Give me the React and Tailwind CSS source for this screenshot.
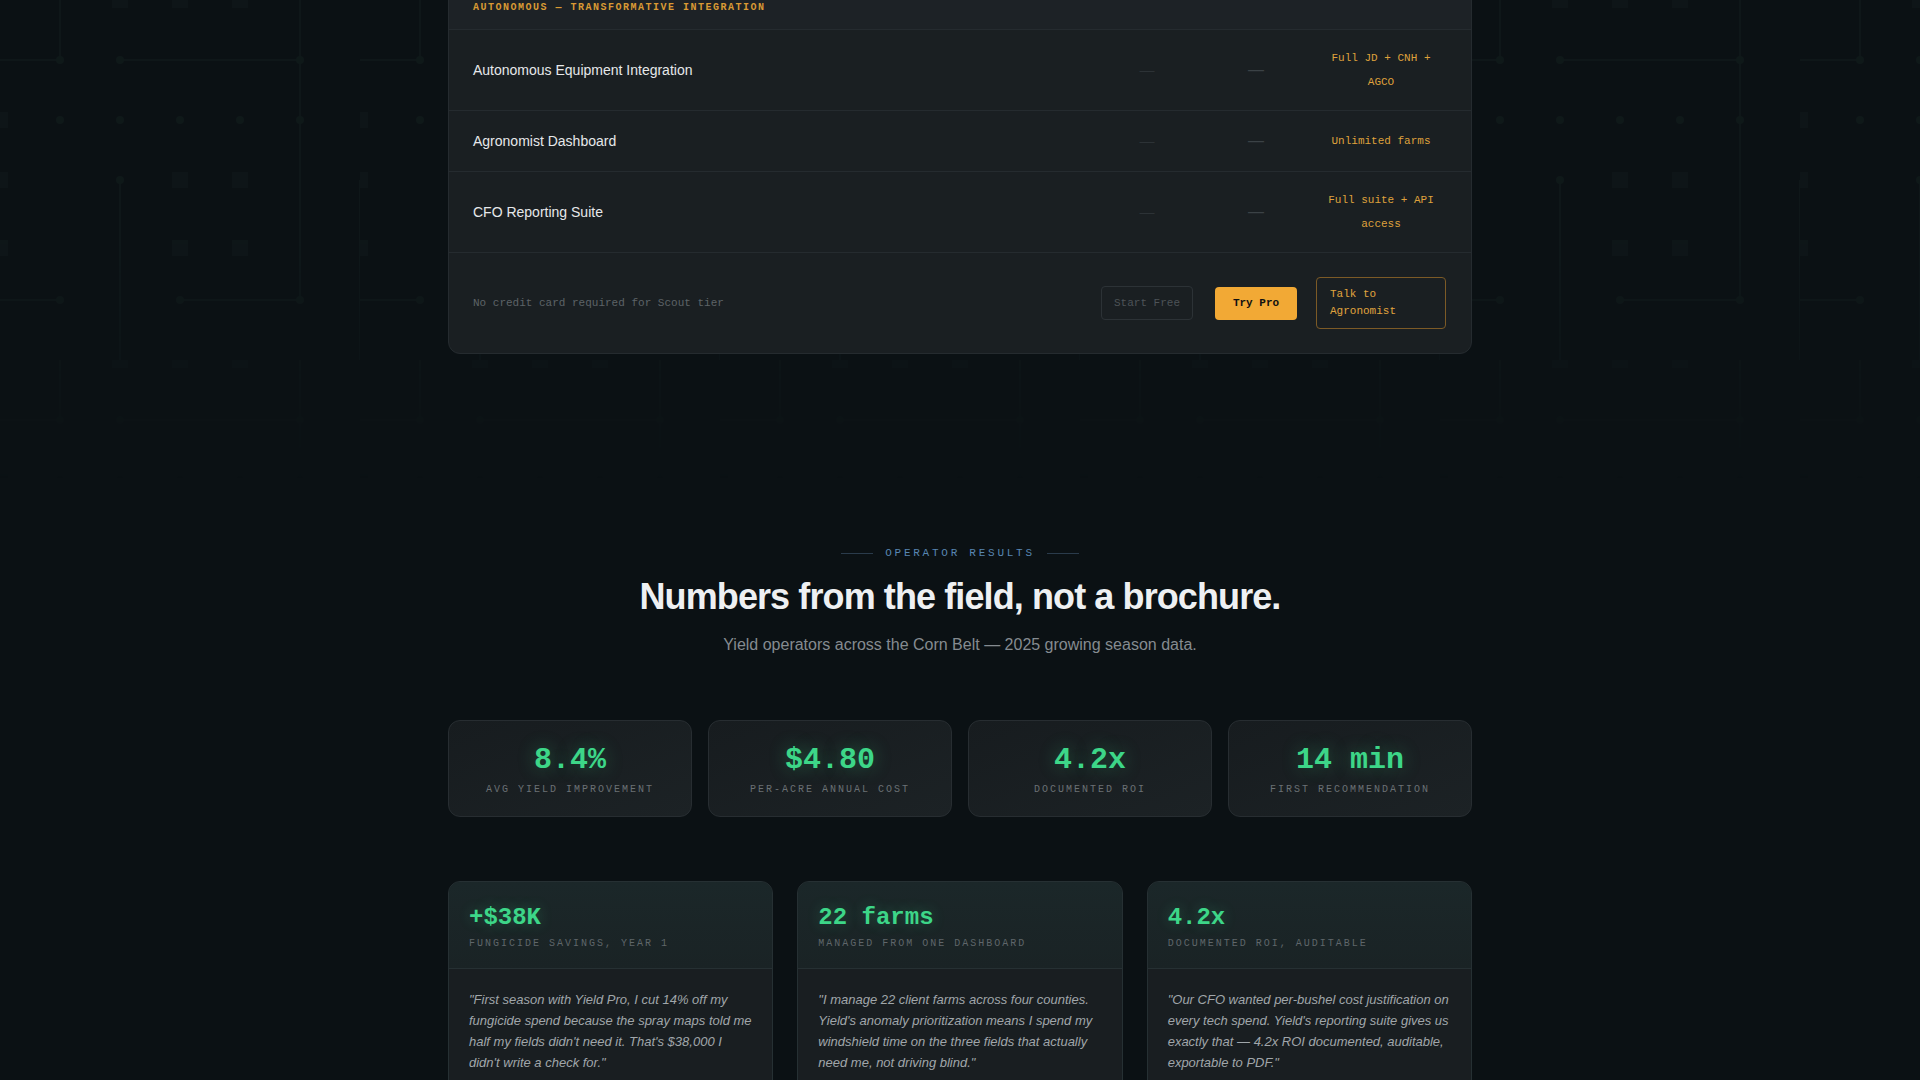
import React from "react";

const mono = "font-['Liberation_Mono',monospace]";
const sans = "font-['Liberation_Sans',Arial,sans-serif]";

const tierRows = [
  { label: "Autonomous Equipment Integration", pro: "Full JD + CNH + AGCO" },
  { label: "Agronomist Dashboard", pro: "Unlimited farms" },
  { label: "CFO Reporting Suite", pro: "Full suite + API access" },
];

const stats = [
  { value: "8.4%", label: "Avg yield improvement" },
  { value: "$4.80", label: "Per-acre annual cost" },
  { value: "4.2x", label: "Documented ROI" },
  { value: "14 min", label: "First recommendation" },
];

const stories = [
  {
    value: "+$38K",
    label: "Fungicide savings, year 1",
    quote:
      "\"First season with Yield Pro, I cut 14% off my fungicide spend because the spray maps told me half my fields didn't need it. That's $38,000 I didn't write a check for.\"",
  },
  {
    value: "22 farms",
    label: "Managed from one dashboard",
    quote:
      "\"I manage 22 client farms across four counties. Yield's anomaly prioritization means I spend my windshield time on the three fields that actually need me, not driving blind.\"",
  },
  {
    value: "4.2x",
    label: "Documented ROI, auditable",
    quote:
      "\"Our CFO wanted per-bushel cost justification on every tech spend. Yield's reporting suite gives us exactly that — 4.2x ROI documented, auditable, exportable to PDF.\"",
  },
];

// faint circuit-board texture behind the top of the page
const CircuitBackdrop = () => (
  <svg
    className="absolute inset-x-0 top-0 h-[480px] w-full opacity-45 [mask-image:linear-gradient(to_bottom,black_50%,transparent)]"
    aria-hidden="true"
  >
    <defs>
      <pattern id="circuit" width="360" height="360" patternUnits="userSpaceOnUse" x="0" y="0">
        <g stroke="#142021" strokeWidth="2" fill="none">
          <path d="M0 60H60M120 60H300M60 0V60M300 0V300M180 300H300M0 300H60M120 180V360M360 180V360" />
        </g>
        <g fill="#131c1e">
          <rect x="112" y="-8" width="16" height="16" />
          <rect x="172" y="-8" width="16" height="16" />
          <rect x="232" y="-8" width="16" height="16" />
          <rect x="172" y="172" width="16" height="16" />
          <rect x="232" y="172" width="16" height="16" />
          <rect x="172" y="240" width="16" height="16" />
          <rect x="232" y="240" width="16" height="16" />
          <rect x="-8" y="112" width="16" height="16" />
          <rect x="-8" y="172" width="16" height="16" />
          <rect x="-8" y="240" width="16" height="16" />
        </g>
        <g fill="#152321">
          <circle cx="60" cy="60" r="4" />
          <circle cx="120" cy="60" r="4" />
          <circle cx="300" cy="60" r="4" />
          <circle cx="60" cy="120" r="4" />
          <circle cx="120" cy="120" r="4" />
          <circle cx="180" cy="120" r="4" />
          <circle cx="240" cy="120" r="4" />
          <circle cx="300" cy="120" r="4" />
          <circle cx="120" cy="180" r="4" />
          <circle cx="180" cy="300" r="4" />
          <circle cx="300" cy="300" r="4" />
          <circle cx="60" cy="300" r="4" />
        </g>
      </pattern>
    </defs>
    <rect width="100%" height="100%" fill="url(#circuit)" />
  </svg>
);

const TierTable = () => (
  <div className="mt-[-15px] overflow-hidden rounded-xl border border-[#252b2f] bg-[#1a1f22]">
    <div className="border-b border-[#252b2f] bg-[#1d2226] px-6 py-[14px]">
      <p className={`${mono} text-[10px] font-bold uppercase leading-[15px] tracking-[0.15em] text-[#d99a34]`}>
        Autonomous — Transformative Integration
      </p>
    </div>

    {tierRows.map((row) => (
      <div
        key={row.label}
        className="grid grid-cols-[1fr_100px_86px_132px] items-center gap-x-4 border-b border-[#252b2f] px-6 py-4"
      >
        <div className={`${sans} text-[14px] text-[#e6e8ea]`}>{row.label}</div>
        <div className={`${sans} flex min-h-7 items-center justify-center text-[15px] text-[#2c3236]`}>—</div>
        <div className={`${sans} flex min-h-7 items-center justify-center text-[16px] text-[#3b4246]`}>—</div>
        <div className={`${mono} px-1 text-center text-[11px] leading-6 text-[#dfa13c]`}>{row.pro}</div>
      </div>
    ))}

    <div className="grid grid-cols-[1fr_100px_86px_132px] items-center gap-x-4 px-6 py-6">
      <p className={`${mono} text-[11px] text-[#5d6367]`}>No credit card required for Scout tier</p>
      <div className="flex justify-center">
        <button className={`${mono} h-[34px] w-[92px] rounded border border-[#2c3236] text-[11px] text-[#4d5357]`}>
          Start Free
        </button>
      </div>
      <div className="flex justify-center">
        <button className={`${mono} h-[33px] w-[82px] rounded bg-[#f2a935] text-[11px] font-bold text-[#111]`}>
          Try Pro
        </button>
      </div>
      <div className="flex justify-center">
        <button
          className={`${mono} w-[130px] rounded border border-[#7c5a26] px-[13px] py-2 text-left text-[11px] leading-[17px] text-[#e0a43e]`}
        >
          Talk to
          <br />
          Agronomist
        </button>
      </div>
    </div>
  </div>
);

const StatCard = ({ value, label }) => (
  <div className="rounded-xl border border-[#272d31] bg-linear-to-br from-[#171c1f] to-[#1c2225] px-5 pt-[21px] pb-[19px] text-center">
    <div
      className={`${mono} text-[30px] font-bold leading-9 text-[#3dd688] [text-shadow:0_0_18px_rgba(61,214,136,0.35)]`}
    >
      {value}
    </div>
    <div className={`${mono} mt-1 text-[10px] uppercase leading-[15px] tracking-[0.2em] text-[#6a7074]`}>{label}</div>
  </div>
);

const StoryCard = ({ value, label, quote }) => (
  <div className="overflow-hidden rounded-xl border border-[#263033] bg-[#191e21]">
    <div className="border-b border-[#263033] bg-linear-to-b from-[#1b2729] to-[#1a2325] px-5 pt-5 pb-[17px]">
      <div
        className={`${mono} text-[24px] font-bold leading-8 text-[#3dd688] [text-shadow:0_0_14px_rgba(61,214,136,0.3)]`}
      >
        {value}
      </div>
      <div className={`${mono} mt-[2px] text-[10px] uppercase leading-[15px] tracking-[0.2em] text-[#5f666a]`}>
        {label}
      </div>
    </div>
    <p className={`${sans} p-5 text-[13px] italic leading-[21px] text-[#a0a6aa]`}>{quote}</p>
  </div>
);

export default function App() {
  return (
    <div className="relative min-h-screen overflow-hidden bg-[#0b1114]">
      <CircuitBackdrop />

      <div className="relative mx-auto w-[1024px]">
        <TierTable />

        <section className="pt-[191px] pb-24">
          <div className="flex items-center justify-center gap-3">
            <span className="h-px w-8 bg-[#2a3b4b]" />
            <span className={`${mono} text-[11px] uppercase leading-4 tracking-[0.25em] text-[#5886b2]`}>
              Operator Results
            </span>
            <span className="h-px w-8 bg-[#2a3b4b]" />
          </div>
          <h2 className={`${sans} mt-4 text-center text-4xl font-bold tracking-tight text-[#eef0f2]`}>
            Numbers from the field, not a brochure.
          </h2>
          <p className={`${sans} mt-4 text-center text-base text-[#858b90]`}>
            Yield operators across the Corn Belt — 2025 growing season data.
          </p>

          <div className="mt-[63px] grid grid-cols-4 gap-4">
            {stats.map((s) => (
              <StatCard key={s.label} {...s} />
            ))}
          </div>

          <div className="mt-16 grid grid-cols-3 gap-6">
            {stories.map((s) => (
              <StoryCard key={s.value} {...s} />
            ))}
          </div>
        </section>
      </div>
    </div>
  );
}
